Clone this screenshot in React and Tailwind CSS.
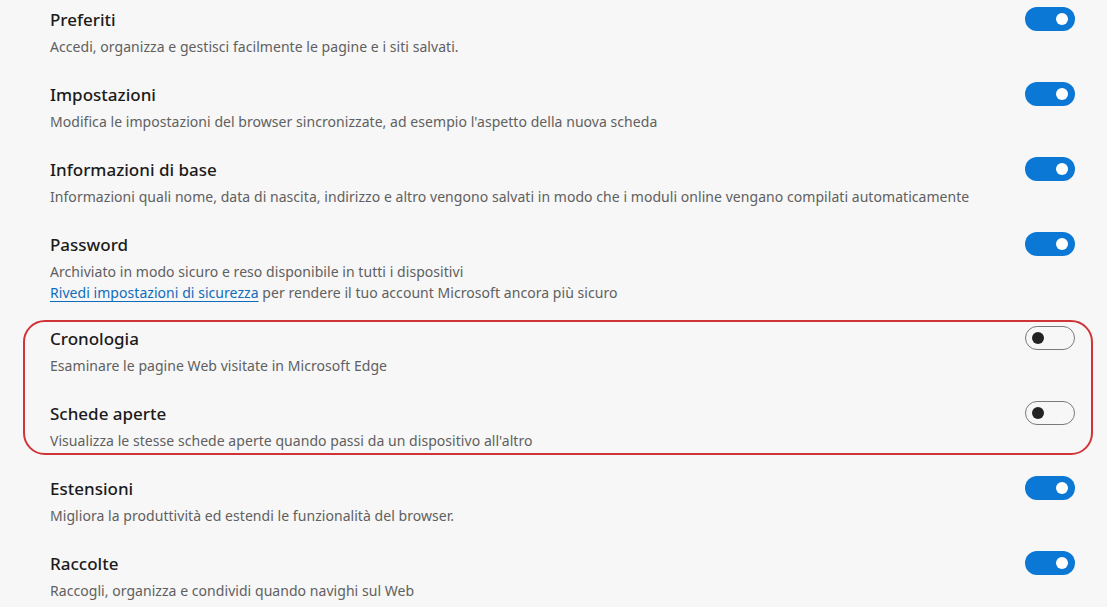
import React from 'react';

const font = { fontFamily: '"Segoe UI", "Noto Sans", "Liberation Sans", sans-serif' };

function Toggle({ on }) {
  if (on) {
    return (
      <div className="w-[50px] h-[24px] shrink-0 rounded-full bg-[#0a78d4] flex items-center justify-end pr-[7px]">
        <div className="w-[12px] h-[12px] rounded-full bg-white" />
      </div>
    );
  }
  return (
    <div className="w-[50px] h-[24px] shrink-0 rounded-full border border-[#7a7a7a] flex items-center pl-[6px]">
      <div className="w-[12px] h-[12px] rounded-full bg-[#232323]" />
    </div>
  );
}

function Item({ title, children, on = true }) {
  return (
    <div className="flex items-start justify-between">
      <div className="flex flex-col">
        <div className="h-[24px] leading-[24px] text-[17px] font-medium text-[#1b1b1b]">{title}</div>
        <div className="mt-[4px] text-[14px] leading-[21px] text-[#606060] tracking-[0.05px]">{children}</div>
      </div>
      <div className="-mt-[1px]">
        <Toggle on={on} />
      </div>
    </div>
  );
}

export default function App() {
  return (
    <div className="w-[1107px] h-[607px] overflow-hidden bg-[#f7f7f7]" style={font}>
      <div className="flex flex-col gap-[26px] pt-[8px] pl-[50px] pr-[32px]">
        <Item title="Preferiti">Accedi, organizza e gestisci facilmente le pagine e i siti salvati.</Item>
        <Item title="Impostazioni">
          Modifica le impostazioni del browser sincronizzate, ad esempio l'aspetto della nuova scheda
        </Item>
        <Item title="Informazioni di base">
          Informazioni quali nome, data di nascita, indirizzo e altro vengono salvati in modo che i moduli online vengano compilati automaticamente
        </Item>
        <Item title="Password">
          Archiviato in modo sicuro e reso disponibile in tutti i dispositivi
          <br />
          <span className="text-[#0f6cbd] underline underline-offset-[3px] decoration-[#0f6cbd]">Rivedi impostazioni di sicurezza</span>{' '}
          per rendere il tuo account Microsoft ancora più sicuro
        </Item>
        <div className="-mt-[9px] -mb-[4px] -ml-[27px] -mr-[18px] pl-[25px] pr-[16px] pt-[5px] pb-[2px] border-2 border-[#d13438] rounded-[22px] flex flex-col gap-[26px]">
          <Item title="Cronologia" on={false}>Esaminare le pagine Web visitate in Microsoft Edge</Item>
          <Item title="Schede aperte" on={false}>
            Visualizza le stesse schede aperte quando passi da un dispositivo all'altro
          </Item>
        </div>
        <Item title="Estensioni">Migliora la produttività ed estendi le funzionalità del browser.</Item>
        <Item title="Raccolte">Raccogli, organizza e condividi quando navighi sul Web</Item>
      </div>
    </div>
  );
}
